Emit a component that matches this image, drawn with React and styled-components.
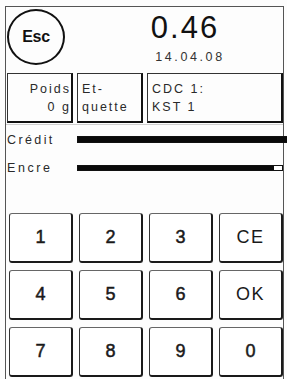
import React from "react";
import styled, { createGlobalStyle } from "styled-components";

const Global = createGlobalStyle`
  html, body { margin: 0; padding: 0; background: #ffffff; }
  body { font-family: "Liberation Sans", Arial, sans-serif; color: #1a1a1a; overflow: hidden; }
`;

const Screen = styled.div`
  width: 287px;
  height: 379px;
  background: #fdfdfd;
  overflow: hidden;
  padding-top: 6px;
  padding-left: 5px;
  box-sizing: border-box;
`;

const Frame = styled.div`
  width: 279px;
  height: 373px;
  box-sizing: border-box;
  border: 1px solid #555;
  border-bottom: none;
  display: flex;
  flex-direction: column;
`;

const Header = styled.div`
  height: 66px;
  display: flex;
  align-items: flex-start;
`;

const EscButton = styled.div`
  width: 54px;
  height: 52px;
  margin: 2px 0 0 1px;
  border: 2px solid #111;
  border-radius: 50%;
  display: flex;
  align-items: center;
  justify-content: center;
  font-weight: bold;
  font-size: 16px;
  letter-spacing: -0.3px;
  color: #111;
`;

const Info = styled.div`
  flex: 1;
  display: flex;
  flex-direction: column;
  align-items: center;
  padding-left: 22px;
`;

const Amount = styled.div`
  font-size: 31px;
  letter-spacing: 2px;
  line-height: 36px;
  margin-top: 3px;
  color: #111;
`;

const DateText = styled.div`
  font-size: 12.5px;
  letter-spacing: 2.6px;
  line-height: 16px;
  margin-top: 3px;
  margin-left: 10px;
  color: #333;
`;

const InfoRow = styled.div`
  display: flex;
  gap: 4px;
  padding-left: 1px;
  height: 51px;
  border-bottom: 1px solid #cfcfcf;
`;

const InfoBox = styled.div`
  width: ${(p) => p.$w}px;
  flex: ${(p) => (p.$grow ? 1 : "none")};
  height: 50px;
  box-sizing: border-box;
  border: 1px solid #333;
  border-right: 2px solid #111;
  border-bottom: 2px solid #111;
  display: flex;
  flex-direction: column;
  justify-content: center;
  align-items: ${(p) => (p.$right ? "flex-end" : "flex-start")};
  padding: ${(p) => (p.$right ? "0" : "0 0 0 4px")};
  font-size: 12.5px;
  letter-spacing: 2px;
  line-height: 18px;
  color: #2a2a2a;
`;

const Bars = styled.div`
  display: flex;
  flex-direction: column;
  gap: 15px;
  padding-top: 8px;
  height: 88px;
  box-sizing: border-box;
`;

const BarRow = styled.div`
  display: flex;
  align-items: center;
  height: 13px;
`;

const BarLabel = styled.div`
  width: 70px;
  padding-left: 1px;
  font-size: 12.5px;
  letter-spacing: ${(p) => p.$ls}px;
  color: #2a2a2a;
`;

const BarTrack = styled.div`
  flex: 1;
  height: ${(p) => p.$h}px;
  margin-right: ${(p) => p.$mr}px;
  background: #fff;
  border: 1px solid #111;
  box-sizing: border-box;
  display: flex;
`;

const BarFill = styled.div`
  height: 100%;
  background: #0a0a0a;
`;

const Keypad = styled.div`
  display: grid;
  grid-template-columns: repeat(4, 64px);
  grid-template-rows: repeat(3, 50px);
  column-gap: 6px;
  row-gap: 7px;
  padding-left: 3px;
`;

const Key = styled.div`
  box-sizing: border-box;
  border: 1px solid #666;
  border-right: 2px solid #1a1a1a;
  border-bottom: 2px solid #1a1a1a;
  border-left-color: #333;
  border-radius: 3px;
  display: flex;
  align-items: center;
  justify-content: center;
  font-size: 18px;
  letter-spacing: ${(p) => (p.$word ? 1.5 : 0)}px;
  -webkit-text-stroke: ${(p) => (p.$word ? 0 : 0.5)}px #1a1a1a;
  color: #1a1a1a;
  background: #fff;
`;

const keys = ["1", "2", "3", "CE", "4", "5", "6", "OK", "7", "8", "9", "0"];

export default function App() {
  return (
    <Screen>
      <Global />
      <Frame>
        <Header>
          <EscButton>Esc</EscButton>
          <Info>
            <Amount>0.46</Amount>
            <DateText>14.04.08</DateText>
          </Info>
        </Header>
        <InfoRow>
          <InfoBox $w={66} $right>
            <span>Poids</span>
            <span>0 g</span>
          </InfoBox>
          <InfoBox $w={66}>
            <span>Et-</span>
            <span>quette</span>
          </InfoBox>
          <InfoBox $grow>
            <span>CDC 1:</span>
            <span>KST 1</span>
          </InfoBox>
        </InfoRow>
        <Bars>
          <BarRow>
            <BarLabel $ls={2.4}>Crédit</BarLabel>
            <BarTrack $h={7} $mr={-5}>
              <BarFill style={{ width: "100%" }} />
            </BarTrack>
          </BarRow>
          <BarRow>
            <BarLabel $ls={2.6}>Encre</BarLabel>
            <BarTrack $h={6} $mr={0}>
              <BarFill style={{ width: "96%" }} />
            </BarTrack>
          </BarRow>
        </Bars>
        <Keypad>
          {keys.map((k) => (
            <Key key={k} $word={k.length > 1}>
              {k}
            </Key>
          ))}
        </Keypad>
      </Frame>
    </Screen>
  );
}
